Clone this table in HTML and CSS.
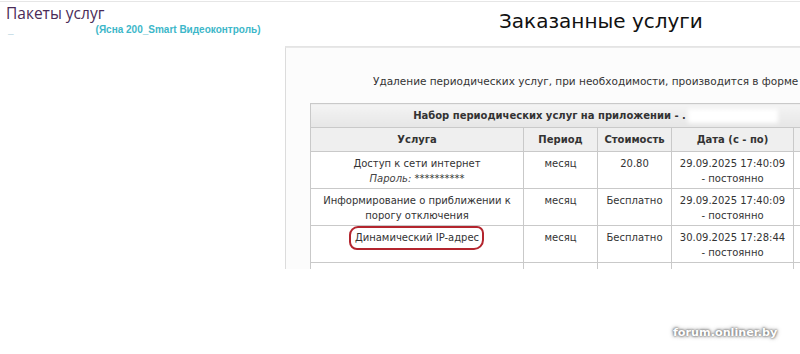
FILE: index.html
```html
<!DOCTYPE html>
<html lang="ru">
<head>
<meta charset="utf-8">
<title>Заказанные услуги</title>
<link rel="stylesheet" href="styles.css">
</head>
<body>
<div class="page">
  <aside class="side">
    <h2 class="side-title">Пакеты услуг</h2>
    <div class="pkg"><span class="pkg-dash">_</span><span class="pkg-hidden"></span><span class="pkg-name">(Ясна 200_Smart Видеоконтроль)</span></div>
  </aside>
  <main class="main">
    <h1 class="title">Заказанные услуги</h1>
    <section class="panel">
      <p class="note">Удаление периодических услуг, при необходимости, производится в форме</p>
      <table class="svc">
        <colgroup>
          <col class="c1"><col class="c2"><col class="c3"><col class="c4"><col class="c5">
        </colgroup>
        <thead>
          <tr class="caption-row"><th colspan="5">Набор периодических услуг на приложении - .<span class="redact"></span></th></tr>
          <tr class="head-row"><th>Услуга</th><th>Период</th><th>Стоимость</th><th>Дата (с - по)</th><th></th></tr>
        </thead>
        <tbody>
          <tr><td>Доступ к сети интернет<br><i>Пароль:</i> **********</td><td>месяц</td><td>20.80</td><td>29.09.2025 17:40:09<br>- постоянно</td><td></td></tr>
          <tr><td>Информирование о приближении к<br>порогу отключения</td><td>месяц</td><td>Бесплатно</td><td>29.09.2025 17:40:09<br>- постоянно</td><td></td></tr>
          <tr><td><span class="mark">Динамический IP-адрес</span></td><td>месяц</td><td>Бесплатно</td><td>30.09.2025 17:28:44<br>- постоянно</td><td></td></tr>
          <tr class="empty"><td></td><td></td><td></td><td></td><td></td></tr>
        </tbody>
      </table>
    </section>
  </main>
</div>
<div class="wm">forum.onliner.by</div>
</body>
</html>
```
FILE: styles.css
```css
html, body {
  margin: 0;
  padding: 0;
  background: #fff;
  width: 800px;
  height: 354px;
  overflow: hidden;
}
body {
  position: relative;
  font-family: "DejaVu Sans", Verdana, sans-serif;
}
.page {
  display: flex;
  border-top: 1px solid #e6e6e6;
  margin-top: 1px;
}
.side {
  width: 285px;
  flex: none;
}
.side-title {
  margin: 0;
  padding: 1px 0 0 6px;
  font-family: "Open Sans", sans-serif;
  font-weight: 400;
  font-size: 15.5px;
  line-height: 20px;
  color: #4a2b57;
}
.pkg {
  margin-top: 1px;
  padding-left: 8px;
  font-family: "Liberation Sans", Arial, sans-serif;
  font-size: 10px;
  font-weight: bold;
  color: #3db7c9;
  white-space: nowrap;
}
.pkg-dash { color: #8bbcd0; }
.pkg-hidden {
  display: inline-block;
  width: 82px;
}
.main {
  flex: 1;
  min-width: 0;
}
.title {
  margin: 0;
  height: 45px;
  box-sizing: border-box;
  padding: 7px 0 0 214px;
  font-weight: 400;
  font-size: 20px;
  color: #111;
  border-bottom: 1px solid #e4e4e4;
}
.panel {
  margin-top: 0;
  height: 221px;
  overflow: hidden;
  background: #fcfcfc;
  border-left: 1px solid #dcdcdc;
  border-top: 1px solid #e8e8e8;
  padding: 0 0 0 24px;
}
.note {
  margin: 27px 0 16px 63px;
  font-size: 10.5px;
  color: #333;
  white-space: nowrap;
}
.svc {
  border-collapse: collapse;
  table-layout: fixed;
  width: 570px;
  font-size: 10px;
  color: #333;
  background: #fff;
}
.c1 { width: 213px; }
.c2 { width: 74px; }
.c3 { width: 74px; }
.c4 { width: 122px; }
.c5 { width: 87px; }
.svc th, .svc td {
  border: 1px solid #c9c9c9;
  text-align: center;
  white-space: nowrap;
}
.caption-row th {
  height: 23px;
  padding: 0;
  background: linear-gradient(#f4f4f4, #e6e6e6);
  font-weight: bold;
}
.redact {
  display: inline-block;
  vertical-align: middle;
  width: 90px;
  height: 14px;
  margin-left: 2px;
  background: #fff;
  filter: blur(2px);
}
.head-row th {
  height: 23px;
  padding: 0;
  background: #efefef;
  font-weight: bold;
}
.svc td {
  height: 37px;
  padding: 4px 4px 0;
  vertical-align: top;
  line-height: 15px;
  box-sizing: border-box;
}
.svc i { color: #444; }
.empty td { height: 20px; }
.mark {
  position: relative;
  display: inline-block;
}
.mark::after {
  content: "";
  position: absolute;
  left: -6px;
  right: -5px;
  top: -4px;
  bottom: -5px;
  border: 2px solid #b3252e;
  border-radius: 9px 7px 10px 8px;
}
.wm {
  position: absolute;
  left: 673px;
  top: 326px;
  font-family: "DejaVu Sans", sans-serif;
  font-weight: bold;
  font-size: 11.2px;
  color: #fff;
  text-shadow: 0 0 3px #777, 0 0 5px #999, 0 0 2px #666;
}
```
